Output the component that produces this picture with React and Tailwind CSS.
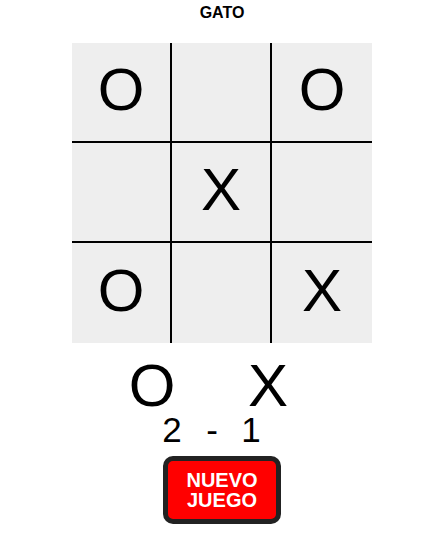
import { useState } from 'react'

const initialBoard = ['O', '', 'O', '', 'X', '', 'O', '', 'X']

export default function App() {
  const [board, setBoard] = useState(initialBoard)
  const [score] = useState({ O: 2, X: 1 })

  const cellClass = (i) => {
    const col = i % 3
    const row = Math.floor(i / 3)
    return [
      'flex items-center justify-center bg-[#eeeeee] h-[100px] pb-[4px] border-black',
      col < 2 ? 'border-r-2' : '',
      row < 2 ? 'border-b-2' : '',
    ].join(' ')
  }

  return (
    <div className="min-h-screen bg-white font-['Liberation_Sans',Arial,sans-serif] text-black flex flex-col items-center pl-[5px]">
      <h1 className="pt-[4px] text-[16px] leading-[18px] font-bold">GATO</h1>

      <div className="mt-[21px] grid grid-cols-3 w-[300px]">
        {board.map((v, i) => (
          <div key={i} className={cellClass(i)}>
            <span className="text-[60px] leading-normal">{v}</span>
          </div>
        ))}
      </div>

      <div className="mt-[17px] w-[300px] flex text-[60px] leading-[52px]">
        <span className="ml-[50px] w-[60px] text-center">O</span>
        <span className="ml-[56px] w-[60px] text-center">X</span>
      </div>

      <div className="w-[300px] flex text-[35px] leading-[35px]">
        <span className="ml-[90px] w-[20px] text-center">{score.O}</span>
        <span className="ml-[20px] w-[20px] text-center">-</span>
        <span className="ml-[19px] w-[20px] text-center">{score.X}</span>
      </div>

      <button
        onClick={() => setBoard(Array(9).fill(''))}
        className="mt-[9px] w-[118px] h-[68px] border-[5px] border-[#222222] rounded-[10px] bg-[#ff0000] text-white font-bold text-[20px] leading-[20px] flex flex-col items-center justify-center"
      >
        <span>NUEVO</span>
        <span>JUEGO</span>
      </button>
    </div>
  )
}
